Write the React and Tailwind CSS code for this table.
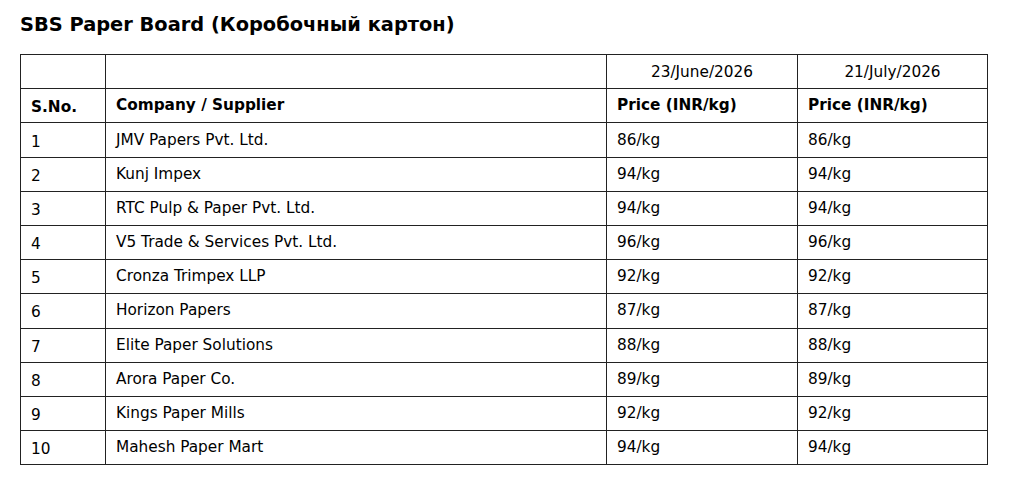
import React from "react";

const rows = [
  ["1", "JMV Papers Pvt. Ltd.", "86/kg", "86/kg"],
  ["2", "Kunj Impex", "94/kg", "94/kg"],
  ["3", "RTC Pulp & Paper Pvt. Ltd.", "94/kg", "94/kg"],
  ["4", "V5 Trade & Services Pvt. Ltd.", "96/kg", "96/kg"],
  ["5", "Cronza Trimpex LLP", "92/kg", "92/kg"],
  ["6", "Horizon Papers", "87/kg", "87/kg"],
  ["7", "Elite Paper Solutions", "88/kg", "88/kg"],
  ["8", "Arora Paper Co.", "89/kg", "89/kg"],
  ["9", "Kings Paper Mills", "92/kg", "92/kg"],
  ["10", "Mahesh Paper Mart", "94/kg", "94/kg"],
];

export default function App() {
  return (
    <div className="w-[1024px] h-[489px] bg-white text-black font-['DejaVu_Sans',sans-serif] px-[20px] pt-[12px]">
      <h1 className="text-[19.4px] font-bold leading-[26px] mb-[16px]">SBS Paper Board (Коробочный картон)</h1>
      <table className="border-collapse text-[15.3px] table-fixed w-[967px]">
        <colgroup>
          <col className="w-[85px]" />
          <col className="w-[501px]" />
          <col className="w-[191px]" />
          <col className="w-[190px]" />
        </colgroup>
        <tbody>
          <tr className="h-[34.2px]">
            <td className="border border-[#222]"></td>
            <td className="border border-[#222]"></td>
            <td className="border border-[#222] text-center pt-[2px]">23/June/2026</td>
            <td className="border border-[#222] text-center pt-[2px]">21/July/2026</td>
          </tr>
          <tr className="h-[34.2px] font-bold">
            <td className="border border-[#222] px-[10px] pt-[3px]">S.No.</td>
            <td className="border border-[#222] px-[10px]">Company / Supplier</td>
            <td className="border border-[#222] px-[10px]">Price (INR/kg)</td>
            <td className="border border-[#222] px-[10px]">Price (INR/kg)</td>
          </tr>
          {rows.map((r) => (
            <tr key={r[0]} className="h-[34.2px]">
              <td className="border border-[#222] px-[10px] pt-[4px]">{r[0]}</td>
              <td className="border border-[#222] px-[10px]">{r[1]}</td>
              <td className="border border-[#222] px-[10px]">{r[2]}</td>
              <td className="border border-[#222] px-[10px]">{r[3]}</td>
            </tr>
          ))}
        </tbody>
      </table>
    </div>
  );
}
